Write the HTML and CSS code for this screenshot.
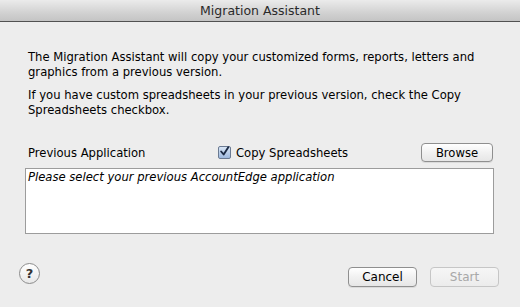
FILE: index.html
```html
<!DOCTYPE html>
<html>
<head>
<meta charset="utf-8">
<link rel="stylesheet" href="styles.css">
</head>
<body>
<div class="window">
  <div class="titlebar">Migration Assistant</div>
  <div class="content">
    <p class="para">The Migration Assistant will copy your customized forms, reports, letters and graphics from a previous version.</p>
    <p class="para">If you have custom spreadsheets in your previous version, check the Copy Spreadsheets checkbox.</p>
    <div class="row">
      <span class="label">Previous Application</span>
      <label class="check">
        <span class="box"><svg width="13" height="13" viewBox="0 0 13 13"><path d="M2.5 6.5 L5.5 10 L11 1.5" fill="none" stroke="#1b2a44" stroke-width="2.2" stroke-linecap="round" stroke-linejoin="round"/></svg></span>
        <span>Copy Spreadsheets</span>
      </label>
      <button class="btn browse">Browse</button>
    </div>
    <div class="field">Please select your previous AccountEdge application</div>
    <div class="footer">
      <button class="help">?</button>
      <div class="actions">
        <button class="btn action">Cancel</button>
        <button class="btn action disabled">Start</button>
      </div>
    </div>
  </div>
</div>
</body>
</html>
```
FILE: styles.css
```css
html, body {
  margin: 0;
  padding: 0;
}
body {
  width: 520px;
  height: 307px;
  background: #ededed;
  font-family: "DejaVu Sans", "Liberation Sans", sans-serif;
  font-size: 11.6px;
  color: #000;
  overflow: hidden;
}
.window {
  display: flex;
  flex-direction: column;
  height: 307px;
}
.titlebar {
  height: 21px;
  line-height: 22px;
  text-align: center;
  font-size: 12.5px;
  color: #2a2a2a;
  background: linear-gradient(#ebebeb, #d2d2d2 60%, #c4c4c4);
  border-bottom: 1px solid #515151;
}
.content {
  padding: 28px 26px 0 25px;
  display: flex;
  flex-direction: column;
}
.para {
  margin: 0 0 8px 3px;
  line-height: 15px;
}
.row {
  margin-top: 17px;
  display: flex;
  align-items: center;
  height: 19px;
}
.label {
  margin-left: 3px;
  width: 190px;
}
.check {
  display: flex;
  align-items: center;
  gap: 5px;
}
.box {
  width: 13px;
  height: 13px;
  box-sizing: border-box;
  border: 1px solid #6a7a92;
  border-radius: 2px;
  background: linear-gradient(#d9e6f6, #9db8de);
  display: flex;
  align-items: center;
  justify-content: center;
}
.box svg {
  display: block;
  margin-top: -2px;
}
.btn {
  font-family: inherit;
  font-size: 11.6px;
  color: #000;
  background: linear-gradient(#ffffff, #f1f1f1 50%, #e6e6e6);
  border: 1px solid #8f8f8f;
  border-radius: 4px;
  padding: 0;
  box-shadow: 0 1px 0 rgba(0,0,0,0.08);
}
.browse {
  margin-left: auto;
  width: 72px;
  height: 19px;
  margin-right: 1px;
}
.field {
  margin-top: 6px;
  height: 66px;
  box-sizing: border-box;
  border: 1px solid #9c9c9c;
  background: #fff;
  font-style: italic;
  padding: 2px 2px;
  line-height: 13px;
}
.footer {
  margin-top: 29px;
  display: flex;
  align-items: flex-start;
}
.help {
  margin-left: -6px;
  width: 21px;
  height: 21px;
  border-radius: 50%;
  border: 1px solid #8c8c8c;
  background: linear-gradient(#ffffff, #e8e8e8);
  font-family: inherit;
  font-size: 13px;
  font-weight: bold;
  color: #333;
  padding: 0;
  line-height: 18px;
}
.actions {
  margin-left: auto;
  margin-top: 4px;
  display: flex;
  gap: 13px;
  margin-right: -5px;
}
.action {
  width: 69px;
  height: 20px;
  font-size: 12px;
}
.disabled {
  color: #a8a8a8;
  border-color: #c6c6c6;
  background: linear-gradient(#f6f6f6, #ececec);
  box-shadow: none;
}
```
